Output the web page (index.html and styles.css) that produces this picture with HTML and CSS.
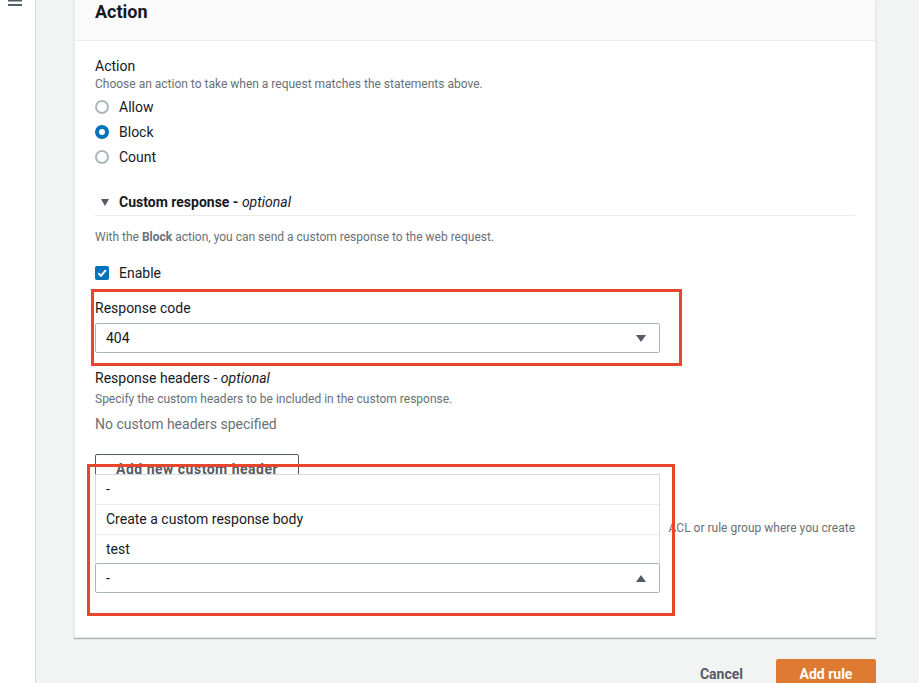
FILE: index.html
```html
<!DOCTYPE html>
<html lang="en">
<head>
<meta charset="utf-8">
<title>Action</title>
<link rel="stylesheet" href="styles.css">
</head>
<body>
<div class="app">
  <aside class="sidebar">
    <svg class="menu" width="14" height="6" viewBox="0 0 14 6"><rect x="0" y="-0.5" width="14" height="2" fill="#545b64"/><rect x="0" y="4" width="14" height="2" fill="#545b64"/></svg>
  </aside>
  <main class="main">
    <section class="card">
      <header class="card-header"><h2>Action</h2></header>
      <div class="card-body">
        <div class="label">Action</div>
        <div class="desc">Choose an action to take when a request matches the statements above.</div>
        <div class="radios">
          <div class="radio-row"><span class="radio"></span>Allow</div>
          <div class="radio-row"><span class="radio checked"></span>Block</div>
          <div class="radio-row"><span class="radio"></span>Count</div>
        </div>
        <div class="expander">
          <div class="exp-head"><span class="caret"></span><b>Custom response -</b>&nbsp;<i>optional</i></div>
          <div class="exp-body">
            <div class="desc">With the <b>Block</b> action, you can send a custom response to the web request.</div>
            <div class="check-row">
              <span class="checkbox"><svg width="14" height="14" viewBox="0 0 14 14"><path d="M3.3 7.2 L6 9.8 L10.8 4.2" fill="none" stroke="#fff" stroke-width="2"/></svg></span>Enable
            </div>
            <div class="label mt15">Response code</div>
            <div class="select mt5"><span>404</span><span class="tri down"></span></div>
            <div class="label mt15">Response headers - <i>optional</i></div>
            <div class="desc mt3">Specify the custom headers to be included in the custom response.</div>
            <div class="empty">No custom headers specified</div>
            <button class="btn">Add new custom header</button>
            <div class="desc clip"><span>ACL or rule group where you create</span></div>
            <div class="select-wrap">
              <div class="dropdown">
                <div class="opt">-</div>
                <div class="opt">Create a custom response body</div>
                <div class="opt">test</div>
              </div>
              <div class="select"><span>-</span><span class="tri up"></span></div>
            </div>
          </div>
        </div>
      </div>
    </section>
    <footer class="actions">
      <button class="link">Cancel</button>
      <button class="primary">Add rule</button>
    </footer>
  </main>
</div>
<div class="annot a1"></div>
<div class="annot a2"></div>
</body>
</html>
```

FILE: styles.css
```css
* { box-sizing: border-box; }
html, body { margin: 0; padding: 0; }
body {
  width: 919px;
  height: 683px;
  overflow: hidden;
  position: relative;
  background: #f2f3f3;
  font-family: Roboto, "Liberation Sans", Arial, sans-serif;
  font-size: 14px;
  line-height: 20px;
  color: #16191f;
}
.app { display: flex; min-height: 683px; }
.sidebar {
  width: 36px;
  flex: none;
  background: #fff;
  border-right: 1px solid #d5dbdb;
}
.menu { display: block; margin-left: 8px; }
.main { flex: 1; min-width: 0; padding: 0 43px 0 38px; }
.card {
  background: #fff;
  border: 1px solid #eaeded;
  border-top: none;
  box-shadow: 0 1px 1px 0 rgba(0, 28, 36, 0.3);
}
.card-header {
  background: #fafafa;
  border-bottom: 1px solid #eaeded;
  padding: 0 20px 16px;
}
.card-header h2 {
  margin: 0;
  font-size: 18px;
  line-height: 24px;
  font-weight: 700;
}
.card-body { padding: 15px 20px 44px; }
.label { font-size: 14px; line-height: 20px; }
.desc { font-size: 12px; line-height: 16px; color: #687078; }
.radios { margin-top: 2px; }
.radio-row { height: 25px; display: flex; align-items: center; gap: 10px; }
.radio {
  width: 14px; height: 14px; border-radius: 50%;
  border: 2px solid #aab7b8; background: #fff; flex: none;
}
.radio.checked { border: 4.5px solid #0073bb; }
.expander { margin-top: 23px; }
.exp-head {
  display: flex; align-items: center;
  line-height: 20px;
  padding-bottom: 3px;
  border-bottom: 1px solid #eaeded;
}
.caret {
  width: 0; height: 0;
  border-left: 4.5px solid transparent;
  border-right: 4.5px solid transparent;
  border-top: 7px solid #545b64;
  margin: 0 10px 0 6px;
}
.exp-body { padding-top: 13px; }
.check-row { margin-top: 18px; display: flex; align-items: center; gap: 10px; height: 20px; }
.checkbox {
  width: 14px; height: 14px; border-radius: 2px; background: #0073bb;
  display: block; flex: none;
}
.checkbox svg { display: block; }
.mt15 { margin-top: 15px; }
.mt5 { margin-top: 5px; }
.mt3 { margin-top: 3px; }
.select {
  width: 565px; height: 30px;
  border: 1px solid #aab7b8; border-radius: 2px; background: #fff;
  display: flex; align-items: center; justify-content: space-between;
  padding: 0 13px 0 10px;
}
.tri { width: 0; height: 0; border-left: 5px solid transparent; border-right: 5px solid transparent; }
.tri.down { border-top: 7px solid #545b64; }
.tri.up { border-bottom: 7px solid #545b64; }
.empty { margin-top: 7px; color: #687078; }
.btn {
  margin-top: 20px;
  height: 30px;
  padding: 0 20px;
  border: 1px solid #545b64; border-radius: 2px;
  background: #fff; color: #545b64;
  font: 700 14px/20px Roboto, "Liberation Sans", Arial, sans-serif;
  letter-spacing: 0.5px;
  display: block;
}
.clip {
  margin-top: 36px;
  margin-left: 566px;
  display: flex; justify-content: flex-end;
  white-space: nowrap;
}
.clip span { flex: none; }
.select-wrap { position: relative; margin-top: 27px; }
.dropdown {
  position: absolute; left: 0; bottom: 100%;
  width: 565px;
  background: #fff;
  border: 1px solid #d5dbdb; border-bottom: none;
}
.opt { height: 29.5px; line-height: 29px; padding-left: 10px; border-top: 1px solid #eaeded; }
.opt:first-child { border-top: none; height: 29px; }
.actions {
  margin-top: 21px;
  display: flex; justify-content: flex-end; align-items: center; gap: 12px;
}
.actions button {
  height: 30px; border-radius: 2px;
  font: 700 14px/20px Roboto, "Liberation Sans", Arial, sans-serif;
  padding: 0 20px;
}
.link { background: transparent; border: 1px solid transparent; color: #545b64; }
.primary { background: #df7a33; border: 1px solid #df7a33; color: #fff; width: 100px; padding: 0; }
.annot { position: absolute; border: 3px solid #e8452d; pointer-events: none; }
.a1 { left: 91px; top: 289px; width: 591px; height: 77px; }
.a2 { left: 87px; top: 464px; width: 588px; height: 152px; }
```
